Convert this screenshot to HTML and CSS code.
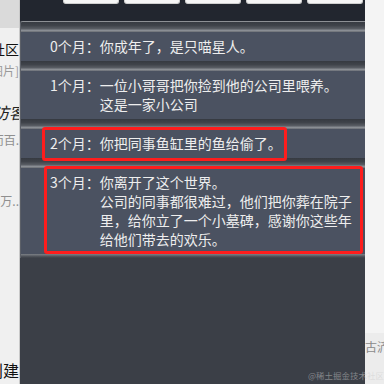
FILE: index.html
```html
<!DOCTYPE html>
<html lang="zh">
<head>
<meta charset="utf-8">
<title>猫的一生</title>
<link rel="stylesheet" href="styles.css">
</head>
<body>
<div class="page">
  <aside class="left">
    <div class="hd"></div>
    <div class="frag f1"><span>社区</span></div>
    <div class="frag f2"><span>[图片]</span></div>
    <div class="frag f3"><span>访客</span></div>
    <div class="frag f4"><span>而百.</span></div>
    <div class="frag f5"><span>3万..</span></div>
    <div class="frag f6"><span>创建</span></div>
  </aside>
  <main class="panel">
    <div class="toolbar">
      <span class="btn"></span><span class="btn"></span><span class="btn"></span><span class="btn"></span><span class="btn"></span>
    </div>
    <ul class="list">
      <li class="sep"></li>
      <li class="item"><span class="label">0个月：</span><span class="text">你成年了，是只喵星人。</span></li>
      <li class="sep"></li>
      <li class="item"><span class="label">1个月：</span><span class="text">一位小哥哥把你捡到他的公司里喂养。<br>这是一家小公司</span></li>
      <li class="sep"></li>
      <li class="item"><span class="label">2个月：</span><span class="text">你把同事鱼缸里的鱼给偷了。</span></li>
      <li class="sep"></li>
      <li class="item"><span class="label">3个月：</span><span class="text">你离开了这个世界。<br>公司的同事都很难过，他们把你葬在院子里，给你立了一个小墓碑，感谢你这些年给他们带去的欢乐。</span></li>
      <li class="sep end"></li>
    </ul>
  </main>
  <aside class="right">
    <div class="rbox"><span>古浐</span></div>
  </aside>
  <div class="mark box1"></div>
  <div class="mark box2"></div>
  <div class="watermark">@稀土掘金技术社区</div>
</div>
</body>
</html>
```
FILE: styles.css
```css
html, body {
  margin: 0;
  padding: 0;
}
body {
  width: 384px;
  height: 384px;
  overflow: hidden;
  background: #f4f4f4;
  font-family: "Noto Sans CJK SC", "Noto Sans", sans-serif;
}
.page {
  position: relative;
  display: flex;
  width: 384px;
  height: 384px;
}
.left {
  width: 19px;
  flex: none;
  display: flex;
  flex-direction: column;
  background: #f0f0f0;
  border-right: 1px solid #c9c9c9;
  overflow: hidden;
}
.left .hd {
  height: 28px;
  background: #dadada;
  flex: none;
}
.frag {
  display: flex;
  justify-content: flex-end;
  white-space: nowrap;
  overflow: hidden;
  flex: none;
}
.f1 { margin-top: 12px; font-size: 14px; line-height: 19px; color: #111; }
.f2 { margin-top: 4px; font-size: 12px; line-height: 16px; color: #9a9a9a; }
.f3 { margin-top: 23px; font-size: 16px; line-height: 20px; color: #222; font-style: italic; }
.f3 span { margin-right: -6px; }
.f4 { margin-top: 10px; font-size: 12px; line-height: 16px; color: #8f8f8f; }
.f5 { margin-top: 45px; font-size: 12px; line-height: 16px; color: #8f8f8f; }
.f6 { margin-top: 151px; font-size: 16px; line-height: 20px; color: #111; }

.panel {
  width: 345px;
  flex: none;
  display: flex;
  flex-direction: column;
  background: #3b3f47;
}
.toolbar {
  height: 21px;
  flex: none;
  display: flex;
  gap: 5px;
  padding-left: 43px;
  background: #22262f;
  align-items: flex-start;
}
.btn {
  width: 56px;
  height: 4px;
  box-sizing: border-box;
  background: #f6f6f6;
  border: 1px solid #cfcfcf;
  border-top: none;
  border-radius: 0 0 3px 3px;
}
.list {
  list-style: none;
  margin: 0;
  padding: 0;
  border-top: 1px solid #8d9095;
  border-left: 1px solid #5c6068;
  border-top-left-radius: 3px;
  overflow: hidden;
}
.sep {
  height: 10px;
  background: linear-gradient(to bottom, #363a41 0%, #3f434a 35%, #575b62 65%, #8a8e94 85%, #6a6e75 100%);
}
.sep.end {
  height: 4px;
  background: linear-gradient(to bottom, #7d8187 0%, #50545b 60%, #3b3f47 100%);
}
.item {
  display: flex;
  padding: 5px 8px 5px 29px;
  background: #4b5261;
  color: #eeeeee;
  font-size: 14px;
  line-height: 19px;
}
.label {
  flex: none;
  white-space: nowrap;
}
.text {
  width: 258px;
  flex: none;
}
.right {
  flex: 1;
  display: flex;
  flex-direction: column;
  background: #f4f4f4;
}
.rbox {
  margin-top: 333px;
  flex: 1;
  background: #ececec;
  overflow: hidden;
  white-space: nowrap;
  font-size: 12px;
  line-height: 16px;
  color: #8a8a8a;
  padding-top: 6px;
}
.mark {
  position: absolute;
  box-sizing: border-box;
  border: 3px solid #fe1d1d;
  border-radius: 3px;
}
.box1 { left: 42px; top: 127px; width: 245px; height: 34px; }
.box2 { left: 44px; top: 166px; width: 319px; height: 88px; }
.watermark {
  position: absolute;
  left: 308px;
  top: 369px;
  font-size: 8.5px;
  line-height: 12px;
  color: rgba(205, 205, 205, 0.5);
  white-space: nowrap;
}
```
